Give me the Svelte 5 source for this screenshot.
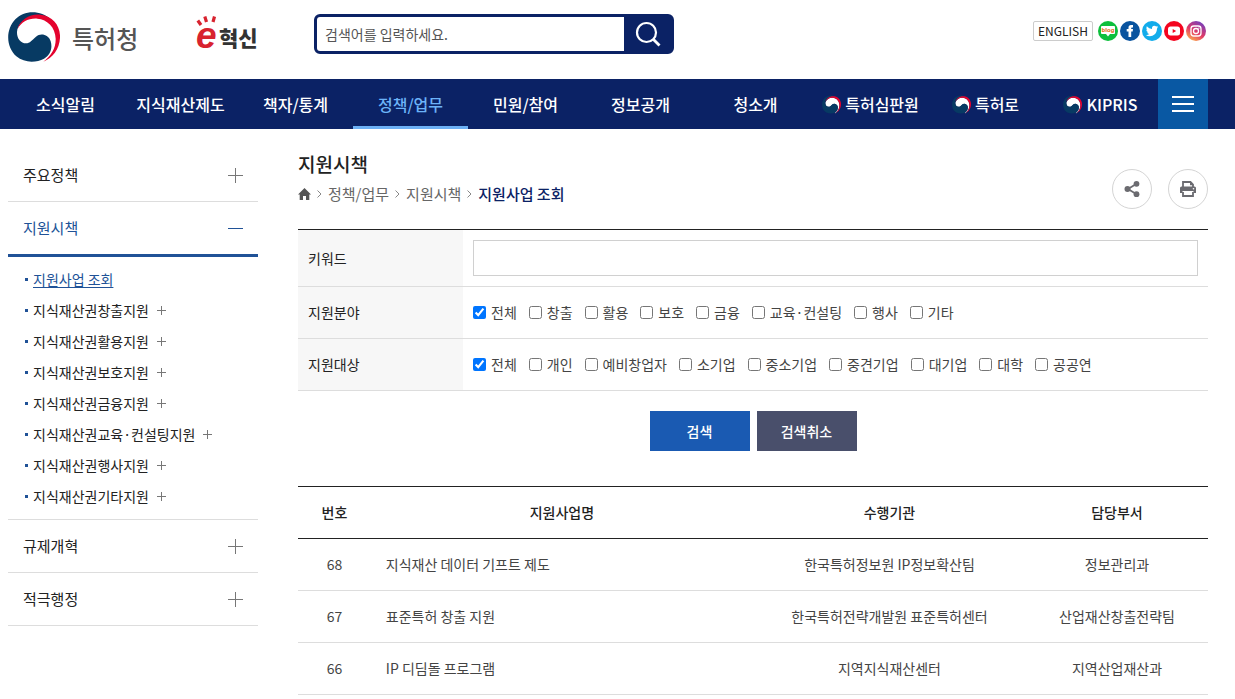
<script>
  let keyword = $state('');
  let query = $state('');

  const menu = [
    { name: '소식알림' },
    { name: '지식재산제도' },
    { name: '책자/통계' },
    { name: '정책/업무', active: true },
    { name: '민원/참여' },
    { name: '정보공개' },
    { name: '청소개' },
    { name: '특허심판원', mark: true },
    { name: '특허로', mark: true },
    { name: 'KIPRIS', mark: true }
  ];

  const subMenu = [
    '지식재산권창출지원',
    '지식재산권활용지원',
    '지식재산권보호지원',
    '지식재산권금융지원',
    '지식재산권교육·컨설팅지원',
    '지식재산권행사지원',
    '지식재산권기타지원'
  ];

  const filters = [
    { label: '지원분야', options: ['전체', '창출', '활용', '보호', '금융', '교육·컨설팅', '행사', '기타'] },
    { label: '지원대상', options: ['전체', '개인', '예비창업자', '소기업', '중소기업', '중견기업', '대기업', '대학', '공공연'] }
  ];

  const programs = [
    { no: 68, name: '지식재산 데이터 기프트 제도', org: '한국특허정보원 IP정보확산팀', dept: '정보관리과' },
    { no: 67, name: '표준특허 창출 지원', org: '한국특허전략개발원 표준특허센터', dept: '산업재산창출전략팀' },
    { no: 66, name: 'IP 디딤돌 프로그램', org: '지역지식재산센터', dept: '지역산업재산과' }
  ];
</script>

{#snippet taegeuk(size)}
  <svg width={size} height={size} viewBox="0 0 156 150" aria-hidden="true">
    <path fill="#fff" d="M27 60C26 78 38 94 54 94C66 94 72 84 84 74C98 62 122 68 128 88C134 108 128 128 108 140L106 149C130 132 144 108 143 80C142 46 118 22 88 20C62 18 40 30 27 60Z" />
    <path fill="#073a63" d="M128 22C100-5 50-8 22 22C-8 54-6 105 25 133C50 154 85 152 108 140C128 128 134 108 128 88C122 68 98 62 84 74C72 84 66 94 54 94C38 94 26 78 27 60C28 38 50 18 80 12C98 9 115 14 128 22Z" />
    <path fill="#e4032e" d="M28 52C36 22 68 4 98 8C135 12 158 42 156 78C154 112 134 138 106 149C130 132 144 108 143 80C142 46 118 22 88 20C62 18 40 30 28 52Z" />
  </svg>
{/snippet}

{#snippet plus(size)}
  <svg class="plus" width={size} height={size} viewBox="0 0 {size} {size}" shape-rendering="crispEdges" aria-hidden="true">
    <path d="M0 {size / 2}H{size}M{size / 2} 0V{size}" stroke="#777" />
  </svg>
{/snippet}

<header>
  <a class="logo" href="#home">{@render taegeuk(52)}<span>특허청</span></a>
  <a class="innovation" href="#innovation">
    <svg width="23" height="36" viewBox="0 0 23 36" aria-hidden="true">
      <path d="M1.800 5.500L5 10M8.800 1.500L10.500 7M18.500 1.500L17 7" stroke="#d8232f" stroke-width="3.200" />
      <text x="0" y="33" fill="#d8232f">e</text>
    </svg>
    <span>혁신</span>
  </a>
  <form class="search">
    <input type="text" bind:value={query} placeholder="검색어를 입력하세요." aria-label="검색어" />
    <button type="button" aria-label="검색">
      <svg width="26" height="26" viewBox="0 0 26 26" fill="none" stroke="#fff" stroke-width="2.200">
        <circle cx="11.500" cy="11.500" r="9.500" />
        <path d="M18 18L24.500 24.500" stroke-width="2.800" />
      </svg>
    </button>
  </form>
  <div class="links">
    <a class="english" href="#english">ENGLISH</a>
    <a href="#blog" aria-label="블로그">
      <svg viewBox="0 0 20 20">
        <circle cx="10" cy="10" r="10" fill="#0dbf3c" />
        <path fill="#fff" d="M4 5H16Q17 5 17 6V12Q17 13 16 13H12L10 15.500L8 13H4Q3 13 3 12V6Q3 5 4 5Z" />
        <text class="blog" x="10" y="11" text-anchor="middle">blog</text>
      </svg>
    </a>
    <a href="#facebook" aria-label="페이스북">
      <svg viewBox="0 0 20 20">
        <circle cx="10" cy="10" r="10" fill="#08539f" />
        <path fill="#fff" d="M8.500 16V10.500H6.700V8H8.500V6.500Q8.500 4 11 4H13V6.400H11.900Q11.200 6.400 11.200 7.200V8H13L12.700 10.500H11.200V16Z" />
      </svg>
    </a>
    <a href="#twitter" aria-label="트위터">
      <svg viewBox="0 0 20 20">
        <circle cx="10" cy="10" r="10" fill="#12aceb" />
        <path fill="#fff" d="M4.800 5.300Q7 7.800 10 8Q9.600 5 12.300 4.800Q13.400 4.800 14.200 5.600L15.800 5L15 6.400L16.200 6.200L15 7.500C15 12.500 11.500 15.200 7.800 15.200Q5.700 15.200 4 14.200Q6.200 14.200 7.400 13.100Q5.600 12.800 5.100 11.300H6.200Q4.300 10.600 4.200 8.600L5.200 8.900Q3.700 7.300 4.800 5.300Z" />
      </svg>
    </a>
    <a href="#youtube" aria-label="유튜브">
      <svg viewBox="0 0 20 20">
        <circle cx="10" cy="10" r="10" fill="#f4051f" />
        <rect x="4" y="5.500" width="12" height="9" rx="2.500" fill="#fff" />
        <path fill="#f4051f" d="M8.700 8V12L12.200 10Z" />
      </svg>
    </a>
    <a href="#instagram" aria-label="인스타그램">
      <svg viewBox="0 0 20 20">
        <linearGradient id="insta" x1="0.200" y1="1" x2="0.800" y2="0">
          <stop offset="0" stop-color="#fdb44b" />
          <stop offset="0.450" stop-color="#e23a66" />
          <stop offset="1" stop-color="#6a3fc4" />
        </linearGradient>
        <circle cx="10" cy="10" r="10" fill="url(#insta)" />
        <g fill="none" stroke="#fff" stroke-width="1.300">
          <rect x="5" y="5" width="10" height="10" rx="2.800" />
          <circle cx="10" cy="10" r="2.500" />
        </g>
        <circle cx="12.900" cy="7.100" r="0.700" fill="#fff" />
      </svg>
    </a>
  </div>
</header>

<nav class="gnb">
  {#each menu as item}
    <a href="#menu" class:active={item.active}>
      {#if item.mark}{@render taegeuk(19)}{/if}{item.name}
    </a>
  {/each}
  <button type="button" aria-label="전체메뉴">
    <svg width="22" height="16" viewBox="0 0 22 16" shape-rendering="crispEdges">
      <path d="M0 1H22M0 8H22M0 15H22" stroke="#fff" stroke-width="2" />
    </svg>
  </button>
</nav>

<div class="body">
  <aside>
    <a class="depth" href="#policy">주요정책{@render plus(15)}</a>
    <a class="depth open" href="#support">지원시책<span class="minus"></span></a>
    <ul>
      <li><a class="current" href="#search">지원사업 조회</a></li>
      {#each subMenu as name}
        <li><a href="#sub">{name}{@render plus(9)}</a></li>
      {/each}
    </ul>
    <a class="depth" href="#reform">규제개혁{@render plus(15)}</a>
    <a class="depth" href="#active">적극행정{@render plus(15)}</a>
  </aside>

  <main>
    <div class="head">
      <div>
        <h1>지원시책</h1>
        <div class="path">
          <a href="#home" aria-label="홈">
            <svg width="13" height="12" viewBox="0 0 13 12"><path fill="#555" d="M6.500 0L13 6.500H11.300V12H8V8H5V12H1.700V6.500H0Z" /></svg>
          </a>
          {#each ['정책/업무', '지원시책', '지원사업 조회'] as step, i}
            <svg width="5" height="8" viewBox="0 0 5 8"><path d="M0.500 0.500L4 4L0.500 7.500" fill="none" stroke="#888" /></svg>
            <a href="#path" class:last={i === 2}>{step}</a>
          {/each}
        </div>
      </div>
      <div class="tools">
        <button type="button" aria-label="공유">
          <svg width="16" height="18" viewBox="0 0 16 18" fill="#6b6b70">
            <path d="M13 3.500L4 9L13 14.500" fill="none" stroke="#6b6b70" stroke-width="1.800" />
            <circle cx="12.500" cy="3.800" r="2.900" /><circle cx="3.500" cy="9" r="3" /><circle cx="12.500" cy="14.200" r="2.900" />
          </svg>
        </button>
        <button type="button" aria-label="인쇄">
          <svg width="16" height="18" viewBox="0 0 16 18">
            <path fill="none" stroke="#6b6b70" stroke-width="1.800" d="M3 7V2H10.500L13 4.500V7M3 12V16H13V12" />
            <path fill="#6b6b70" d="M10 1.500L13.800 5.300H10ZM1.500 6.500H14.500Q16 6.500 16 8V13H13.500V11H2.500V13H0V8Q0 6.500 1.500 6.500Z" />
            <circle cx="13.500" cy="8.800" r="0.800" fill="#fff" />
          </svg>
        </button>
      </div>
    </div>

    <form>
      <div class="filter">
        <label class="name" for="keyword">키워드</label>
        <div class="field"><input id="keyword" type="text" bind:value={keyword} /></div>
      </div>
      {#each filters as filter}
        <div class="filter" role="group" aria-label={filter.label}>
          <span class="name">{filter.label}</span>
          <div class="field">
            {#each filter.options as option, i}
              <label class="option"><input type="checkbox" checked={i === 0} />{option}</label>
            {/each}
          </div>
        </div>
      {/each}
      <div class="buttons">
        <button type="button">검색</button>
        <button type="reset">검색취소</button>
      </div>
    </form>

    <table>
      <colgroup>
        <col class="no" /><col class="title" /><col class="org" /><col class="dept" />
      </colgroup>
      <thead>
        <tr><th>번호</th><th>지원사업명</th><th>수행기관</th><th>담당부서</th></tr>
      </thead>
      <tbody>
        {#each programs as p}
          <tr>
            <td>{p.no}</td>
            <td class="subject"><a href="#program">{p.name}</a></td>
            <td>{p.org}</td>
            <td>{p.dept}</td>
          </tr>
        {/each}
      </tbody>
    </table>
  </main>
</div>

<style>
  :global(body) {
    background: #fff;
    color: #222;
    font-family: "Noto Sans CJK KR", sans-serif;
    font-size: 14px;
    line-height: 19px;
    overflow-x: hidden;
  }

  a {
    color: inherit;
    text-decoration: none;
  }

  svg {
    display: block;
    flex: none;
  }

  button,
  input {
    font: inherit;
    box-sizing: border-box;
    margin: 0;
  }

  button {
    display: flex;
    align-items: center;
    justify-content: center;
    border: 0;
    padding: 0;
    cursor: pointer;
  }

  header {
    display: flex;
    align-items: flex-start;
    height: 67px;
    padding: 12px 29px 0 8px;
  }

  .logo {
    display: flex;
    align-items: center;
    gap: 12px;
    width: 188px;
    margin-top: -1px;
    font-size: 24px;
    font-weight: 500;
    color: #555;
  }

  .innovation {
    display: flex;
    align-items: flex-end;
    width: 118px;
    margin-top: 3px;
    font-size: 21px;
    line-height: 24px;
    font-weight: 900;
    color: #333;
  }

  .innovation svg {
    overflow: visible;
  }

  .innovation text {
    font: italic bold 37px "Liberation Sans", sans-serif;
  }

  .innovation span {
    padding-bottom: 2px;
  }

  .search {
    display: flex;
    width: 360px;
    height: 40px;
    margin-top: 2px;
    box-sizing: border-box;
    border: 3px solid #0b2265;
    border-radius: 6px;
    background: #0b2265;
  }

  .search input {
    flex: 1;
    min-width: 0;
    border: 0;
    border-radius: 3px 0 0 3px;
    padding: 0 8px;
    color: #555;
  }

  .search input::placeholder {
    color: #555;
    opacity: 1;
  }

  .search button {
    width: 47px;
    background: #0b2265;
  }

  .links {
    display: flex;
    gap: 2px;
    margin-left: auto;
    margin-top: 9px;
  }

  .links svg {
    width: 20px;
    height: 20px;
  }

  .english {
    width: 58px;
    line-height: 18px;
    margin-right: 3px;
    border: 1px solid #ccc;
    border-radius: 2px;
    font-size: 12px;
    text-align: center;
  }

  .blog {
    font: bold 6px "Noto Sans", sans-serif;
    fill: #e5711b;
  }

  .gnb {
    display: flex;
    height: 50px;
    padding: 0 27px 0 8px;
    background: #0b2265;
    color: #fff;
    font-size: 16px;
    font-weight: 500;
  }

  .gnb a {
    flex: 1;
    display: flex;
    align-items: center;
    justify-content: center;
    gap: 4px;
    border-bottom: 3px solid transparent;
    padding-top: 4px;
    box-sizing: border-box;
    white-space: nowrap;
  }

  .gnb .active {
    color: #6cb3f8;
    border-color: #6cb0f5;
  }

  .gnb button {
    width: 50px;
    background: #0958a3;
  }

  .body {
    display: flex;
    gap: 40px;
    padding: 20px 27px 0 8px;
  }

  aside {
    flex: none;
    width: 250px;
  }

  .depth {
    display: flex;
    align-items: center;
    justify-content: space-between;
    height: 52px;
    padding: 0 15px;
    border-bottom: 1px solid #ddd;
    font-size: 15px;
    line-height: 20px;
  }

  .open {
    color: #205297;
    border-bottom: 3px solid #205297;
  }

  .minus {
    width: 15px;
    height: 1px;
    background: #205297;
  }

  ul {
    list-style: none;
    margin: 0;
    padding: 7px 0 7px 17px;
    border-bottom: 1px solid #ddd;
  }

  li {
    display: flex;
    align-items: center;
    gap: 5px;
    height: 31px;
  }

  li::before {
    content: "";
    width: 3px;
    height: 3px;
    background: #205297;
  }

  li a {
    display: flex;
    align-items: center;
    gap: 8px;
  }

  li .current {
    color: #205297;
    text-decoration: underline;
    text-underline-offset: 2px;
  }

  main {
    flex: 1;
    min-width: 0;
  }

  .head {
    display: flex;
    justify-content: space-between;
    align-items: flex-end;
    margin-bottom: 20px;
  }

  h1 {
    margin: 0;
    font-size: 19px;
    line-height: 30px;
    font-weight: 500;
  }

  .path {
    display: flex;
    align-items: center;
    gap: 6px;
    height: 30px;
    font-size: 15px;
    line-height: 20px;
    color: #666;
  }

  .path .last {
    color: #0b2265;
    font-weight: 500;
  }

  .tools {
    display: flex;
    gap: 16px;
  }

  .tools button {
    width: 40px;
    height: 40px;
    border: 1px solid #d4d4d4;
    border-radius: 50%;
    background: #fff;
  }

  form:not(.search) {
    border-top: 1px solid #222;
  }

  .filter {
    display: flex;
    border-bottom: 1px solid #ddd;
  }

  .filter .name {
    display: flex;
    align-items: center;
    width: 155px;
    padding-left: 10px;
    background: #f7f7f7;
  }

  .field {
    flex: 1;
    display: flex;
    align-items: center;
    flex-wrap: wrap;
    gap: 0 12px;
    padding: 10px;
    min-height: 31px;
  }

  .field input[type="text"] {
    width: 100%;
    height: 36px;
    border: 1px solid #d0d0d0;
    padding: 0 8px;
  }

  .option {
    display: flex;
    align-items: center;
    gap: 5px;
    color: #444;
  }

  .option input {
    width: 13px;
    height: 13px;
  }

  .buttons {
    display: flex;
    justify-content: center;
    gap: 7px;
    margin: 20px 0 35px;
  }

  .buttons button {
    width: 100px;
    height: 40px;
    background: #1a5ab2;
    color: #fff;
    font-weight: 500;
  }

  .buttons button[type="reset"] {
    background: #494f6b;
  }

  table {
    width: 100%;
    table-layout: fixed;
    border-collapse: collapse;
    border-top: 1px solid #222;
    color: #444;
  }

  .no {
    width: 8%;
  }

  .title {
    width: 42%;
  }

  .org {
    width: 30%;
  }

  .dept {
    width: 20%;
  }

  th,
  td {
    height: 51px;
    padding: 0;
    border-bottom: 1px solid #ddd;
    text-align: center;
  }

  th {
    border-color: #222;
    color: #222;
    font-weight: 500;
  }

  .subject {
    padding-left: 15px;
    text-align: left;
  }
</style>
